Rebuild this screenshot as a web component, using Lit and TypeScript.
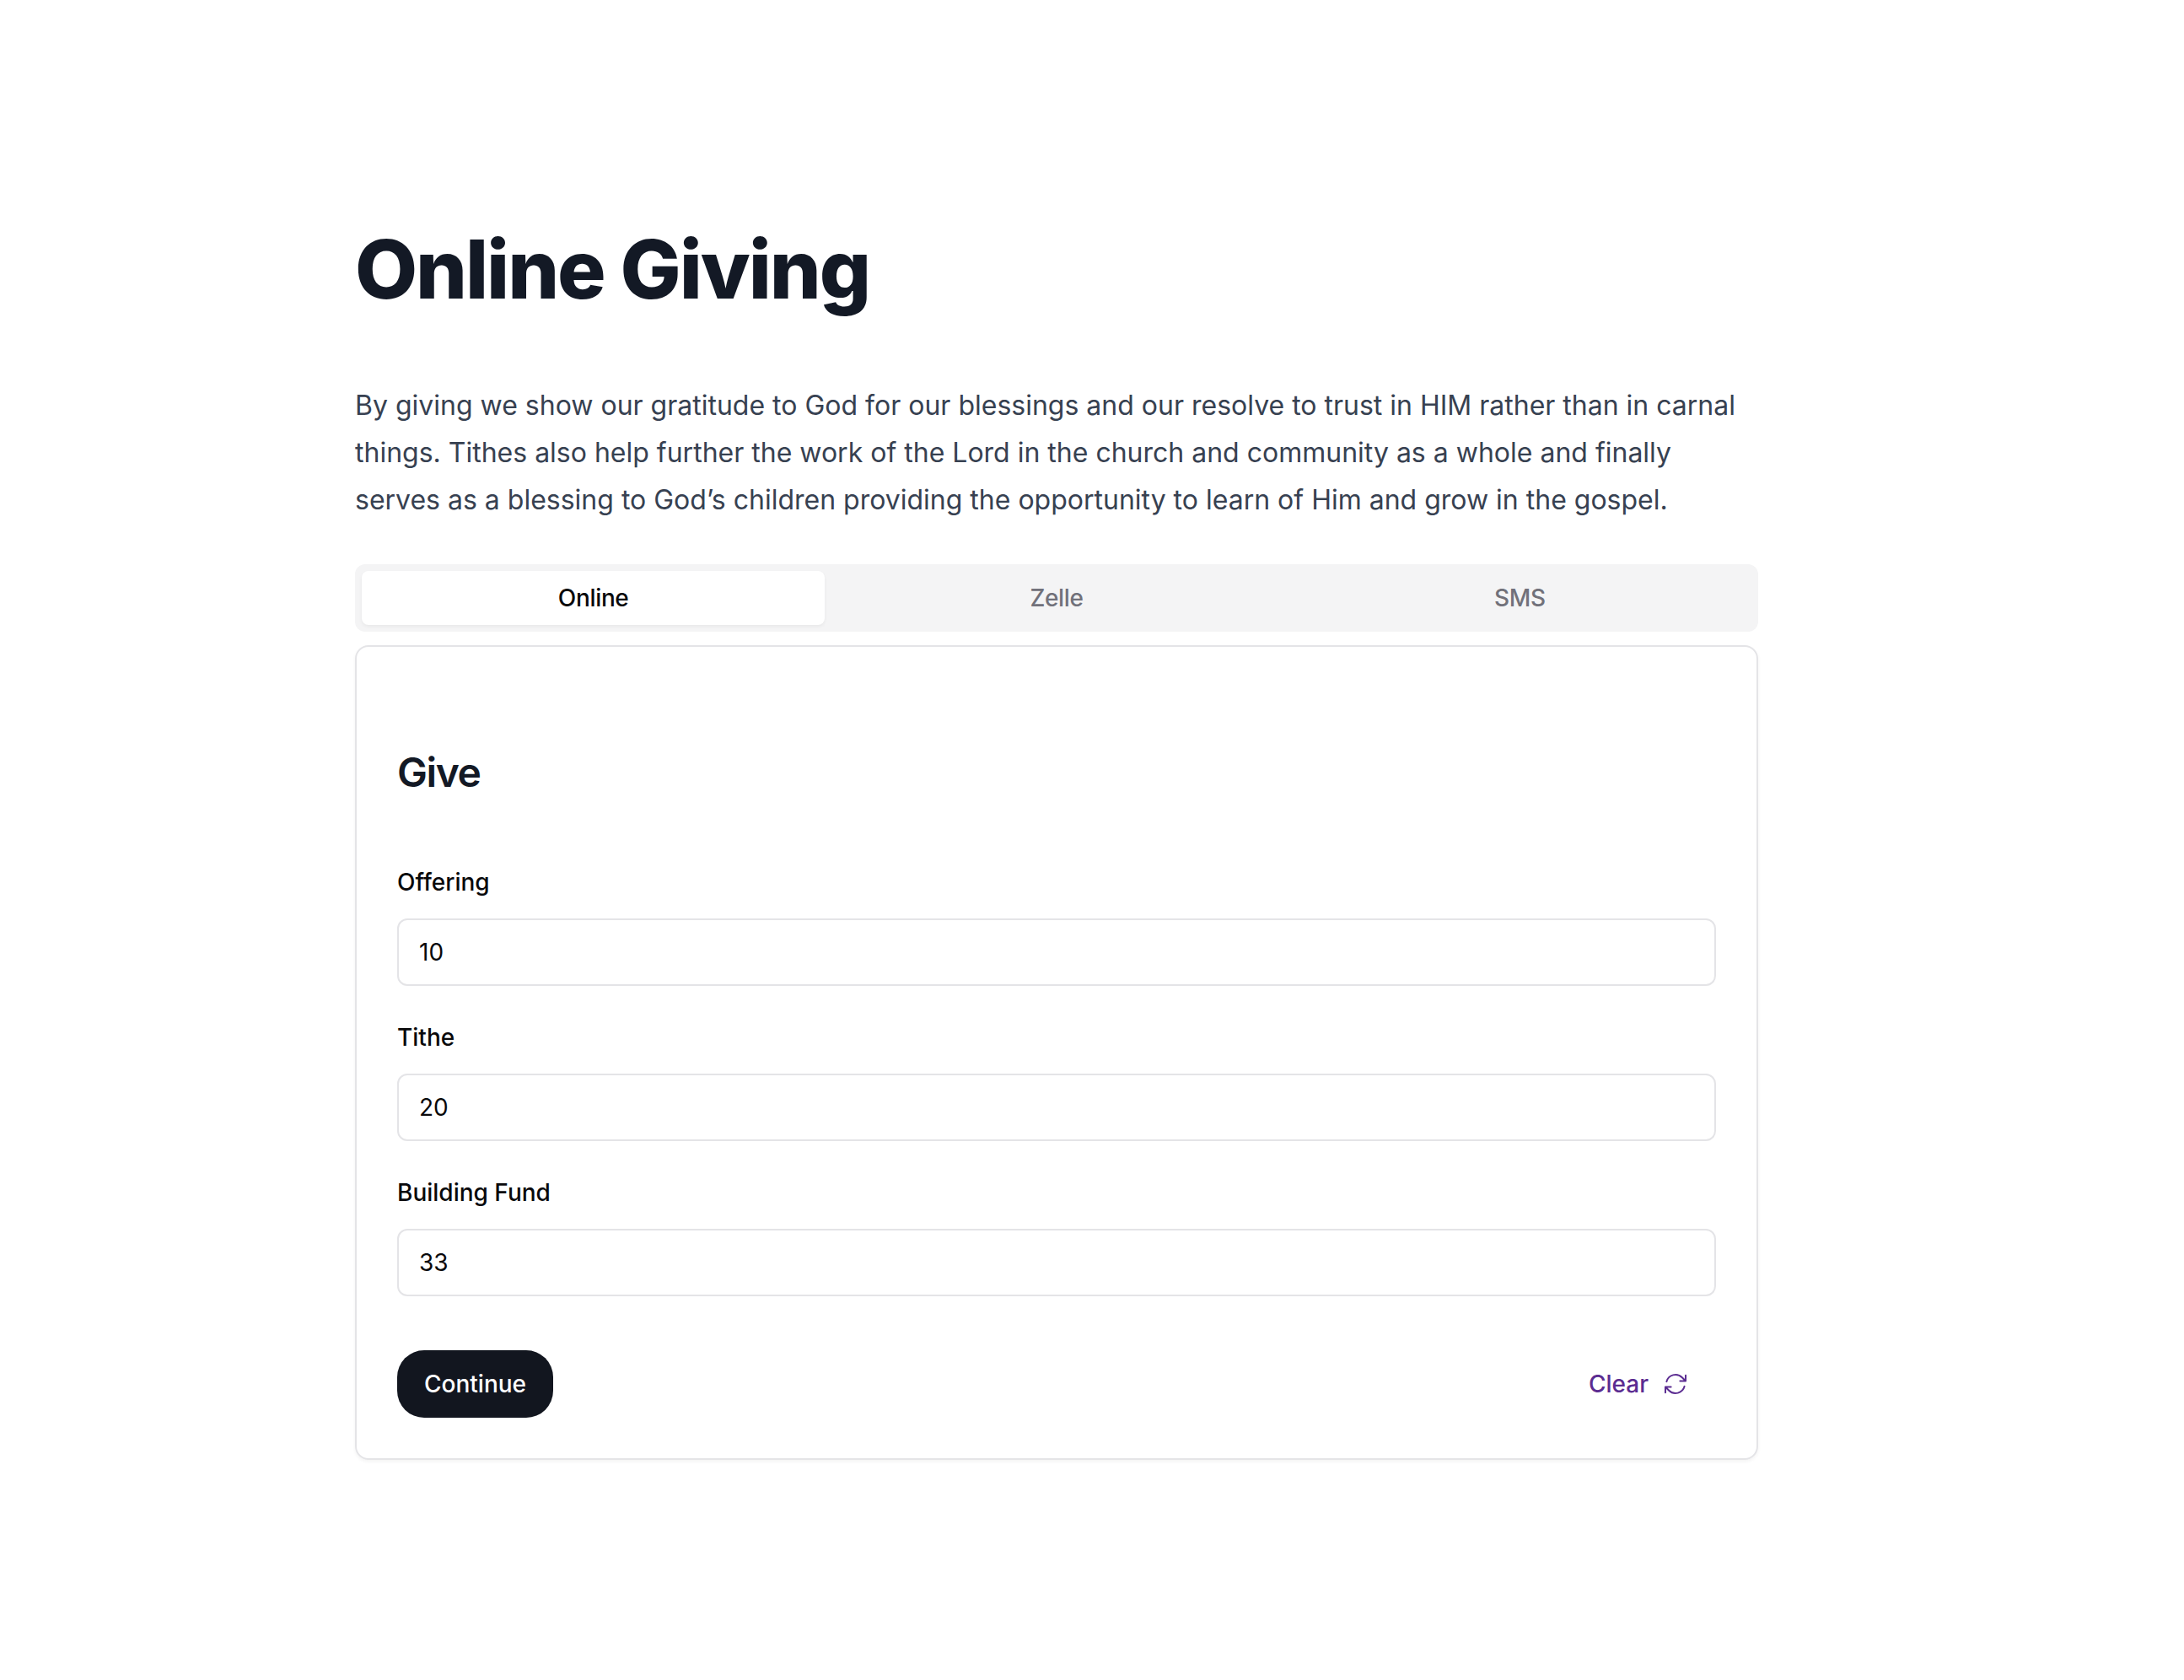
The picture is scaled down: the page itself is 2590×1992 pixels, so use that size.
import { LitElement, html, css } from "lit";
import { customElement } from "lit/decorators.js";

@customElement("app-root")
export class AppRoot extends LitElement {
  static styles = css`
    :host {
      display: block;
      background: #fff;
      min-height: 1992px;
      font-family: "Inter", "Noto Sans", sans-serif;
      -webkit-font-smoothing: antialiased;
      color: #09090b;
    }
    .page {
      width: 1664px;
      margin-left: 421px;
      padding-top: 271px;
      display: flex;
      flex-direction: column;
    }
    h1 {
      margin: 0 0 86px;
      font-size: 96px;
      line-height: 96px;
      font-weight: 800;
      letter-spacing: -2.1px;
      color: #131925;
    }
    .intro {
      margin: 0 0 48px;
      font-size: 32px;
      line-height: 56px;
      color: #374151;
    }
    .tabs {
      display: grid;
      grid-template-columns: repeat(3, 1fr);
      height: 80px;
      box-sizing: border-box;
      padding: 8px;
      border-radius: 12px;
      background: #f4f4f5;
      margin-bottom: 16px;
    }
    .tab {
      display: flex;
      align-items: center;
      justify-content: center;
      border-radius: 8px;
      font-size: 28px;
      font-weight: 500;
      letter-spacing: -0.35px;
      color: #71717a;
    }
    .tab.active {
      background: #fff;
      color: #09090b;
      box-shadow: 0 2px 4px rgba(0, 0, 0, 0.05);
    }
    .card {
      border: 2px solid #e4e4e7;
      border-radius: 16px;
      box-shadow: 0 2px 4px rgba(0, 0, 0, 0.05);
      padding: 125px 48px 48px;
      display: flex;
      flex-direction: column;
    }
    h3 {
      margin: 0 0 86px;
      font-size: 48px;
      line-height: 48px;
      font-weight: 600;
      letter-spacing: -1.4px;
      color: #131925;
    }
    .field {
      display: flex;
      flex-direction: column;
      gap: 23px;
      margin-bottom: 41px;
    }
    label {
      font-size: 28px;
      line-height: 40px;
      font-weight: 500;
    }
    input {
      height: 80px;
      box-sizing: border-box;
      width: 100%;
      border: 2px solid #e4e4e7;
      border-radius: 12px;
      padding: 0 24px;
      font: inherit;
      font-size: 28px;
      color: #09090b;
      background: #fff;
      outline: none;
    }
    .actions {
      display: flex;
      justify-content: space-between;
      align-items: center;
      margin-top: 23px;
    }
    button {
      font: inherit;
      height: 80px;
      border: none;
      display: inline-flex;
      align-items: center;
      font-size: 28px;
      font-weight: 500;
      cursor: pointer;
      padding: 0 32px;
    }
    .primary {
      background: #12161f;
      color: #fff;
      border-radius: 32px;
    }
    .ghost {
      background: transparent;
      color: #5b2c91;
      gap: 16px;
    }
    .ghost svg {
      width: 32px;
      height: 32px;
      display: block;
    }
  `;

  render() {
    const fields = [
      ["Offering", "10"],
      ["Tithe", "20"],
      ["Building Fund", "33"],
    ];
    return html`
      <main class="page">
        <h1>Online Giving</h1>
        <p class="intro">
          By giving we show our gratitude to God for our blessings and our resolve to trust in HIM rather than in carnal
          things. Tithes also help further the work of the Lord in the church and community as a whole and finally
          serves as a blessing to God’s children providing the opportunity to learn of Him and grow in the gospel.
        </p>
        <div class="tabs">
          <div class="tab active">Online</div>
          <div class="tab">Zelle</div>
          <div class="tab">SMS</div>
        </div>
        <section class="card">
          <h3>Give</h3>
          ${fields.map(
            ([l, v]) => html`<div class="field"><label>${l}</label><input .value=${v} /></div>`
          )}
          <div class="actions">
            <button class="primary">Continue</button>
            <button class="ghost">
              Clear
              <svg viewBox="0 0 24 24" fill="none" stroke="currentColor" stroke-width="1.5" stroke-linecap="round" stroke-linejoin="round">
                <path d="M16.023 9.348h4.992v-.001M2.985 19.644v-4.992m0 0h4.992m-4.993 0l3.181 3.183a8.25 8.25 0 0013.803-3.7M4.031 9.865a8.25 8.25 0 0113.803-3.7l3.181 3.182m0-4.991v4.99" />
              </svg>
            </button>
          </div>
        </section>
      </main>
    `;
  }
}
